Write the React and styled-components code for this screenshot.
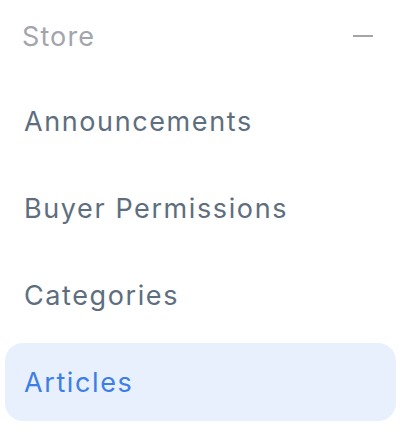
import styled, { createGlobalStyle } from "styled-components";

const GlobalStyle = createGlobalStyle`
    body {
        margin: 0;
        background: #ffffff;
        font-family: Inter, "Open Sans", sans-serif;
    }
`;

const Sidebar = styled.nav`
    width: 420px;
    padding: 0 24px 0 5px;
    box-sizing: border-box;
`;

const Header = styled.div`
    display: flex;
    align-items: center;
    justify-content: space-between;
    height: 72px;
    padding: 0 23px 0 17px;
    margin-bottom: 10px;
    color: #a4a4ad;
    font-size: 27px;
    letter-spacing: 1.1px;
`;

const List = styled.ul`
    list-style: none;
    margin: 0;
    padding: 0;
    display: flex;
    flex-direction: column;
    gap: 9px;
`;

const Item = styled.li`
    display: flex;
    align-items: center;
    height: 78px;
    padding-left: 19px;
    border-radius: 18px;
    font-size: 27px;
    letter-spacing: 1.6px;
    color: ${(p) => (p.active ? "#3d7ee6" : "#5e6e7e")};
    background: ${(p) => (p.active ? "#e8f0fd" : "transparent")};
`;

const Minus = () => (
    <svg width="20" height="4" viewBox="0 0 20 4">
        <rect x="0" y="1" width="20" height="2" fill="#a4a4ad" />
    </svg>
);

const items = ["Announcements", "Buyer Permissions", "Categories", "Articles"];

export default function App() {
    return (
        <>
            <GlobalStyle />
            <Sidebar>
                <Header>
                    <span>Store</span>
                    <Minus />
                </Header>
                <List>
                    {items.map((name) => (
                        <Item key={name} active={name === "Articles"}>
                            {name}
                        </Item>
                    ))}
                </List>
            </Sidebar>
        </>
    );
}
